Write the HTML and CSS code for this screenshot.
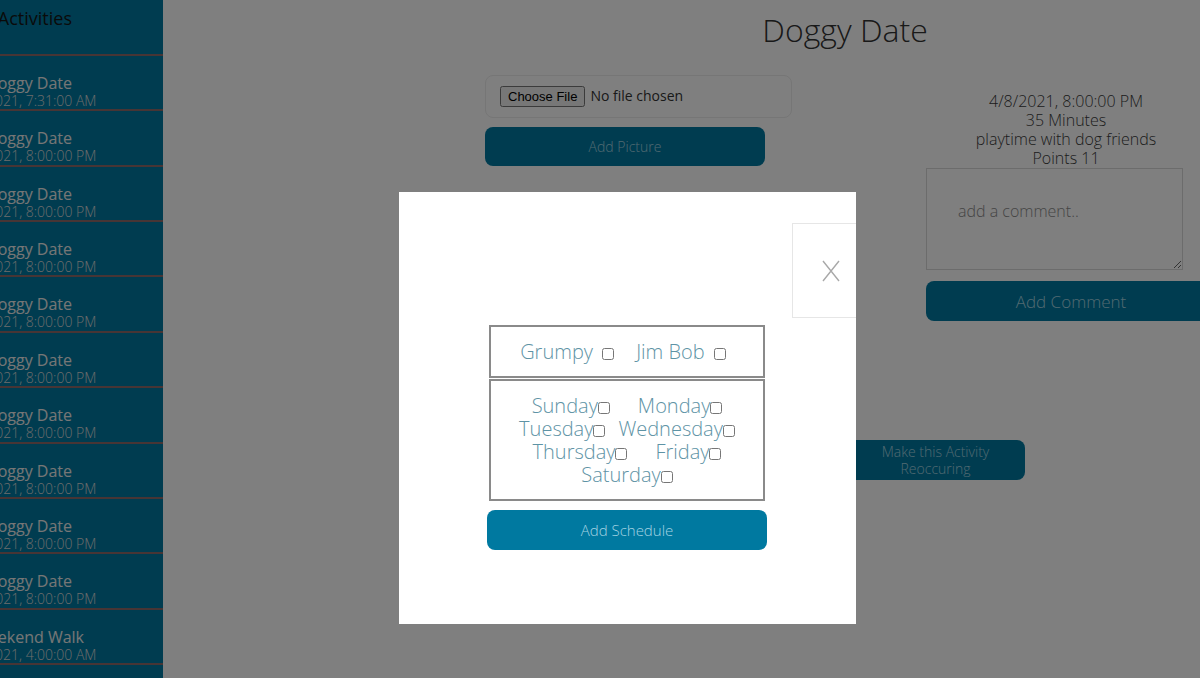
FILE: index.html
```html
<!DOCTYPE html>
<html>
<head>
<meta charset="utf-8">
<link rel="stylesheet" href="styles.css">
</head>
<body>
<div class="page">
  <aside class="sidebar">
    <div class="side-inner">
      <div class="side-head">My Activities</div>
      <div class="side-item"><div class="si-title">Doggy Date</div><div class="si-date">4/8/2021, 7:31:00 AM</div></div>
      <div class="side-item"><div class="si-title">Doggy Date</div><div class="si-date">4/8/2021, 8:00:00 PM</div></div>
      <div class="side-item"><div class="si-title">Doggy Date</div><div class="si-date">4/8/2021, 8:00:00 PM</div></div>
      <div class="side-item"><div class="si-title">Doggy Date</div><div class="si-date">4/8/2021, 8:00:00 PM</div></div>
      <div class="side-item"><div class="si-title">Doggy Date</div><div class="si-date">4/8/2021, 8:00:00 PM</div></div>
      <div class="side-item"><div class="si-title">Doggy Date</div><div class="si-date">4/8/2021, 8:00:00 PM</div></div>
      <div class="side-item"><div class="si-title">Doggy Date</div><div class="si-date">4/8/2021, 8:00:00 PM</div></div>
      <div class="side-item"><div class="si-title">Doggy Date</div><div class="si-date">4/8/2021, 8:00:00 PM</div></div>
      <div class="side-item"><div class="si-title">Doggy Date</div><div class="si-date">4/8/2021, 8:00:00 PM</div></div>
      <div class="side-item"><div class="si-title">Doggy Date</div><div class="si-date">4/8/2021, 8:00:00 PM</div></div>
      <div class="side-item"><div class="si-title">Weekend Walk</div><div class="si-date">4/9/2021, 4:00:00 AM</div></div>
      <div class="side-item"><div class="si-title">Weekend Walk</div><div class="si-date">4/10/2021, 4:00:00 AM</div></div>
    </div>
  </aside>
  <main class="main">
    <h1 class="title">Doggy Date</h1>
    <div class="content-row">
      <div class="left-col">
        <div class="file-box"><input class="file-input" type="file"></div>
        <button class="btn btn-picture">Add Picture</button>
      </div>
      <div class="right-col">
        <div class="details">
          <div>4/8/2021, 8:00:00 PM</div>
          <div>35 Minutes</div>
          <div>playtime with dog friends</div>
          <div>Points 11</div>
        </div>
        <textarea class="comment" placeholder="add a comment.."></textarea>
        <button class="btn btn-comment">Add Comment</button>
      </div>
    </div>
    <div class="reoccur-row">
      <button class="btn btn-reoccur">Make this Activity<br>Reoccuring</button>
    </div>
  </main>
</div>

<div class="overlay">
  <div class="modal">
    <div class="close-box">
      <svg width="20" height="22" viewBox="0 0 20 22"><path d="M2 1 L18 21 M18 1 L2 21" stroke="#a8a8a8" stroke-width="1.4" fill="none"/></svg>
    </div>
    <div class="modal-body">
      <div class="pet-box">
        <label class="opt">Grumpy <input type="checkbox"></label>
        <label class="opt">Jim Bob <input type="checkbox"></label>
      </div>
      <div class="days-box">
        <div class="day-row gap-a"><label class="day">Sunday<input type="checkbox"></label><label class="day">Monday<input type="checkbox"></label></div>
        <div class="day-row gap-b"><label class="day">Tuesday<input type="checkbox"></label><label class="day">Wednesday<input type="checkbox"></label></div>
        <div class="day-row gap-a"><label class="day">Thursday<input type="checkbox"></label><label class="day">Friday<input type="checkbox"></label></div>
        <div class="day-row"><label class="day">Saturday<input type="checkbox"></label></div>
      </div>
      <button class="btn btn-schedule">Add Schedule</button>
    </div>
  </div>
</div>
</body>
</html>
```

FILE: styles.css
```css
* { box-sizing: border-box; }
html, body {
  margin: 0;
  padding: 0;
  width: 1200px;
  height: 678px;
  overflow: hidden;
  background: #fff;
  font-family: "Open Sans", "Liberation Sans", sans-serif;
}
.page {
  display: flex;
  width: 1200px;
  height: 678px;
}
.sidebar {
  width: 163px;
  flex: 0 0 163px;
  height: 678px;
  background: #0079a0;
  overflow: hidden;
}
.side-inner {
  width: 286px;
  margin-left: -123px;
}
.side-head {
  height: 56px;
  padding: 5px 0 0 0;
  border-bottom: 2px solid #8f6b6b;
  text-align: center;
  font-size: 18px;
  line-height: 26px;
  color: #151515;
}
.side-item {
  height: 55.36px;
  padding: 18px 0 0 18px;
  border-bottom: 2px solid #8f6b6b;
  text-align: center;
}
.si-title {
  font-size: 16px;
  line-height: 18px;
  color: #ececec;
}
.si-date {
  font-size: 14px;
  line-height: 18px;
  font-weight: 300;
  color: #d8d8d8;
}
.main {
  flex: 1;
  min-width: 0;
}
.title {
  margin: 0;
  padding: 12px 0 0 327px;
  text-align: center;
  font-size: 32px;
  line-height: 36px;
  font-weight: 300;
  color: #333;
}
.content-row {
  display: flex;
  margin-top: 27px;
  padding-left: 322px;
  gap: 134px;
}
.left-col {
  width: 307px;
  flex: 0 0 307px;
  display: flex;
  flex-direction: column;
}
.file-box {
  height: 43px;
  border: 1px solid #ececec;
  border-radius: 8px;
  padding-left: 14px;
  display: flex;
  align-items: center;
}
.file-input {
  font-family: "Open Sans", sans-serif;
  font-size: 14px;
  color: #333;
}
.file-input::file-selector-button {
  font-family: "Liberation Sans", Arial, sans-serif;
  font-size: 13px;
  margin-right: 5px;
}
.btn {
  border: none;
  border-radius: 8px;
  background: #0079a0;
  color: #a3d3e2;
  font-family: "Open Sans", sans-serif;
  font-weight: 300;
  padding: 0;
  cursor: pointer;
}
.btn-picture {
  margin-top: 9px;
  width: 280px;
  height: 39px;
  font-size: 14px;
}
.right-col {
  width: 280px;
  flex: 0 0 280px;
  padding-top: 17px;
  display: flex;
  flex-direction: column;
}
.details {
  text-align: center;
  font-size: 16px;
  line-height: 19px;
  font-weight: 300;
  color: #3a3a3a;
}
.comment {
  width: 257px;
  height: 102px;
  margin: 0;
  border: 1px solid #d8d8d8;
  padding: 31px 31px;
  font-family: "Open Sans", sans-serif;
  font-size: 16px;
  font-weight: 300;
  resize: vertical;
}
.comment::placeholder {
  color: #8a8a8a;
}
.btn-comment {
  margin-top: 11px;
  width: 290px;
  height: 40px;
  font-size: 17px;
}
.reoccur-row {
  margin-top: 119px;
  padding-left: 683px;
}
.btn-reoccur {
  width: 179px;
  height: 40px;
  font-size: 14px;
  line-height: 17px;
}
.overlay {
  position: fixed;
  inset: 0;
  background: rgba(0, 0, 0, 0.5);
}
.modal {
  position: absolute;
  left: 399px;
  top: 192px;
  width: 457px;
  height: 432px;
  background: #fff;
  overflow: hidden;
}
.close-box {
  position: absolute;
  left: 393px;
  top: 31px;
  width: 78px;
  height: 95px;
  border: 1px solid #e6e6e6;
  display: flex;
  align-items: center;
  justify-content: center;
}
.modal-body {
  padding: 133px 0 0 90px;
  display: flex;
  flex-direction: column;
}
.pet-box {
  width: 276px;
  height: 53px;
  border: 2px solid #8a8a8a;
  display: flex;
  align-items: center;
  justify-content: center;
  gap: 22px;
  padding-right: 8px;
}
.opt, .day {
  font-size: 20px;
  font-weight: 300;
  color: #5e93a5;
  white-space: nowrap;
}
.opt input, .day input {
  margin: 0 0 0 4px;
  width: 12px;
  height: 12px;
  vertical-align: -1px;
}
.day input { margin-left: 0; }
.days-box {
  margin-top: 1px;
  width: 276px;
  height: 122px;
  border: 2px solid #8a8a8a;
  padding-top: 13px;
  display: flex;
  flex-direction: column;
  align-items: center;
}
.day-row {
  display: flex;
  justify-content: center;
  line-height: 23px;
  height: 23px;
}
.gap-a { gap: 28px; }
.gap-b { gap: 13px; }
.btn-schedule {
  margin-top: 9px;
  margin-left: -2px;
  width: 280px;
  height: 40px;
  font-size: 15px;
}
```
